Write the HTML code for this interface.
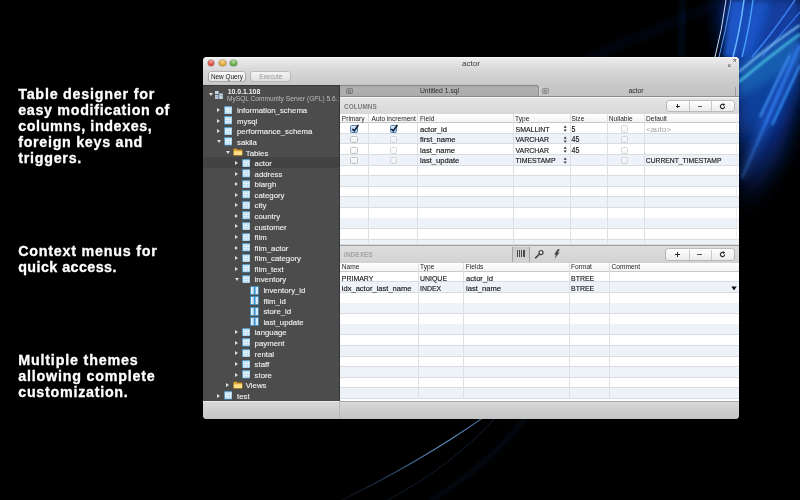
<!DOCTYPE html><html><head><meta charset="utf-8"><style>
*{margin:0;padding:0;box-sizing:border-box}
html,body{width:800px;height:500px;overflow:hidden;background:#000}
body{position:relative;font-family:"Liberation Sans", sans-serif}
.a{position:absolute}
.tri-r{position:absolute;width:0;height:0;border-top:2px solid transparent;border-bottom:2px solid transparent;border-left:3.4px solid #dedede}
.tri-d{position:absolute;width:0;height:0;border-left:2px solid transparent;border-right:2px solid transparent;border-top:3.4px solid #dedede}
.ti{position:absolute;width:8.5px;height:8px;border:0.9px solid #2b7eb0;border-top-color:#7fb8dc;background:linear-gradient(#d8ecf8 0 22%,#f2fbff 22% 100%)}
.ti:before{content:"";position:absolute;left:0.3px;right:0.3px;top:2.9px;height:0.5px;background:#a8d4f0;box-shadow:0 1.7px 0 #a8d4f0}
.ti:after{content:"";position:absolute;top:1.5px;bottom:0.3px;left:2.2px;width:2.2px;border-left:0.5px solid #a8d4f0;border-right:0.5px solid #a8d4f0}
.ci{position:absolute;width:8.5px;height:8.5px;border:0.9px solid #2b7eb0;background:linear-gradient(90deg,#eaf6ff 0 30%,#a6d2f0 30% 38%,#eaf6ff 38% 55%,#3f93d8 55% 78%,#eaf6ff 78%)}
.fi{position:absolute;width:9px;height:6.5px;border-radius:1px;background:linear-gradient(#ffe9a0,#e8b23c);box-shadow:0 0 0 0.5px #a07a20}
svg text{font-family:"Liberation Sans", sans-serif}
</style></head><body>
<svg class="a" style="left:0;top:0" width="800" height="500" viewBox="0 0 800 500">
<defs>
<filter id="b05" x="-50%" y="-50%" width="200%" height="200%"><feGaussianBlur stdDeviation="0.5"/></filter>
<filter id="b1" x="-50%" y="-50%" width="200%" height="200%"><feGaussianBlur stdDeviation="1"/></filter>
<filter id="b2" x="-50%" y="-50%" width="200%" height="200%"><feGaussianBlur stdDeviation="2"/></filter>
<filter id="b4" x="-50%" y="-50%" width="200%" height="200%"><feGaussianBlur stdDeviation="4"/></filter>
<filter id="b10" x="-50%" y="-50%" width="200%" height="200%"><feGaussianBlur stdDeviation="10"/></filter>
<linearGradient id="fade" x1="0" y1="0" x2="0" y2="1"><stop offset="0" stop-color="#fff"/><stop offset="0.5" stop-color="#fff"/><stop offset="1" stop-color="#000"/></linearGradient>
<mask id="m1"><rect x="0" y="0" width="800" height="240" fill="url(#fade)"/></mask>
</defs>
<g mask="url(#m1)">
<polygon points="718,0 800,0 800,90 780,160 745,210 739,120" fill="#0c3290" filter="url(#b10)"/>
<polygon points="735,0 800,0 800,45 739,70" fill="#1448b0" filter="url(#b10)" opacity="0.8"/>
<polygon points="739,55 800,40 800,80 739,150" fill="#0d44a0" filter="url(#b10)" opacity="0.85"/>
<line x1="684" y1="0" x2="680" y2="60" stroke="#0c2a5a" stroke-width="5" filter="url(#b4)" opacity="0.5"/>
<line x1="585" y1="60" x2="725" y2="0" stroke="#0c2458" stroke-width="4" filter="url(#b4)" opacity="0.45"/>
<polygon points="731,0 746,0 736,57 723,57" fill="#2060d8" filter="url(#b2)" opacity="0.8"/>
<polygon points="748,0 772,0 754,57 738,57" fill="#1a56c8" filter="url(#b4)" opacity="0.9"/>
<polygon points="775,0 800,0 800,20 770,57 755,57" fill="#123e9e" filter="url(#b4)" opacity="0.9"/>
<polygon points="800,30 800,62 739,98 739,66" fill="#1a6ab8" filter="url(#b4)" opacity="0.7"/>
<g filter="url(#b05)" fill="none">
<path d="M726,0 Q722,30 715,57" stroke="#c8e0ff" stroke-width="1"/>
<path d="M731,0 Q726,30 719,57" stroke="#5a9af0" stroke-width="1"/>
<path d="M744,0 Q740,30 733,57" stroke="#6ab8ff" stroke-width="1.5"/>
<path d="M753,0 Q749,30 742,57" stroke="#4aa0ff" stroke-width="1.4"/>
<path d="M795,0 Q775,30 752,57" stroke="#3a80f0" stroke-width="1.4"/>
<path d="M800,12 Q780,35 762,57" stroke="#2f70e0" stroke-width="1.2"/>
</g>
<g filter="url(#b1)" fill="none">
<path d="M800,25 Q770,45 739,72" stroke="#90d0ff" stroke-width="1.6"/>
<path d="M800,34 Q770,56 739,82" stroke="#50c8e8" stroke-width="2.4" opacity="0.85"/>
<path d="M790,55 Q775,85 760,117" stroke="#4a9af8" stroke-width="2"/>
<path d="M800,65 Q786,95 772,125" stroke="#3a9aff" stroke-width="2"/>
<path d="M800,45 Q772,108 742,178" stroke="#3a84f0" stroke-width="2.4"/>
</g>
<g filter="url(#b4)" fill="none">
<path d="M800,45 Q772,108 742,178" stroke="#2a6ae0" stroke-width="7" opacity="0.7"/>
</g>
</g>
<linearGradient id="cg" gradientUnits="userSpaceOnUse" x1="342" y1="500" x2="482" y2="419"><stop offset="0" stop-color="#1a2a40" stop-opacity="0.3"/><stop offset="0.45" stop-color="#3a6088"/><stop offset="0.75" stop-color="#6090c0"/><stop offset="1" stop-color="#4a78a8" stop-opacity="0.8"/></linearGradient>
<g filter="url(#b05)" fill="none">
<path d="M340,501 Q420,462 484,417" stroke="url(#cg)" stroke-width="1.1"/>
<path d="M386,501 Q452,466 496,417" stroke="#1c3452" stroke-width="1.2" opacity="0.35"/>
</g>
<g filter="url(#b2)" opacity="0.35" fill="none">
<path d="M430,501 Q488,466 526,417" stroke="#14305a" stroke-width="3"/>
</g>
</svg>

<div class="a" style="left:203px;top:57.2px;width:536.00px;height:361.80px;border-radius:4px;overflow:hidden;background:#d0d0d0"></div>
<div class="a" style="left:203px;top:57.2px;width:536.00px;height:39.20px;border-radius:4px 4px 0 0;background:linear-gradient(#eeeeee,#d8d8d8 33%,#c8c8c8 72%,#c2c2c2)"></div>
<div class="a" style="left:205px;top:57.2px;width:532.00px;height:0.80px;background:#f8f8f8"></div>
<div class="a" style="left:207.79999999999998px;top:59.9px;width:6.60px;height:6.60px;border-radius:50%;background:radial-gradient(circle at 50% 30%,#f8a098,#d23a30 70%);box-shadow:0 0 0 0.6px rgba(60,40,40,0.45)"></div>
<div class="a" style="left:218.99999999999997px;top:59.9px;width:6.60px;height:6.60px;border-radius:50%;background:radial-gradient(circle at 50% 30%,#fbd890,#d89a28 70%);box-shadow:0 0 0 0.6px rgba(60,40,40,0.45)"></div>
<div class="a" style="left:230.2px;top:59.9px;width:6.60px;height:6.60px;border-radius:50%;background:radial-gradient(circle at 50% 30%,#b8e4a0,#4e9e34 70%);box-shadow:0 0 0 0.6px rgba(60,40,40,0.45)"></div>
<div class="a" style="left:208.5px;top:72.2px;width:36.70px;height:9.00px;border-radius:2px;background:linear-gradient(#fdfdfd,#e4e4e4);box-shadow:0 0 0 0.6px #8a8a8a"></div>
<div class="a" style="left:251px;top:72.2px;width:39.40px;height:9.00px;border-radius:2px;background:linear-gradient(#f4f4f4,#e0e0e0);box-shadow:0 0 0 0.6px #a6a6a6"></div>
<svg class="a" style="left:727px;top:58px" width="10" height="10" viewBox="0 0 10 10"><path d="M1.5,8.5 L4,6 M1.5,8.5 v-2.5 M1.5,8.5 h2.5 M8.5,1.5 L6,4 M8.5,1.5 v2.5 M8.5,1.5 h-2.5" stroke="#8a8a8a" stroke-width="1" fill="none"/></svg>
<div class="a" style="left:203px;top:85.2px;width:135.70px;height:315.80px;background:#4c4c4c"></div>
<div class="a" style="left:203px;top:85.2px;width:135.70px;height:0.80px;background:#3a3a3a"></div>
<div class="a" style="left:338.5px;top:85.2px;width:1.00px;height:315.80px;background:#363636"></div>
<div class="a" style="left:203px;top:156.8px;width:135.70px;height:11.00px;background:#434343"></div>
<div class="tri-d" style="left:208.5px;top:93px"></div>
<svg class="a" style="left:214px;top:90px" width="10" height="10" viewBox="0 0 10 10"><rect x="1" y="1" width="3.6" height="3" fill="#c6d8e6"/><rect x="1" y="4.8" width="3.6" height="4.2" fill="#b4cadc"/><rect x="5.2" y="3.4" width="3.6" height="5.6" fill="#c0d4e4"/><rect x="5.6" y="5" width="2.8" height="0.6" fill="#7f9ab0"/><rect x="1.4" y="6.2" width="2.8" height="0.6" fill="#7f9ab0"/></svg>
<div class="tri-r" style="left:217.30px;top:108.10px"></div>
<svg class="a" style="left:224.00px;top:105.60px" width="8.4" height="8.5" viewBox="0 0 9 8.5" preserveAspectRatio="none"><rect x="0.4" y="0.4" width="8.2" height="7.7" fill="#f4fbff" stroke="#2f82b6" stroke-width="0.8"/><rect x="0.8" y="0.8" width="7.4" height="1.9" fill="#bfe2f6"/><path d="M3.1,2.7 V8 M5.9,2.7 V8 M0.8,4.5 H8.2 M0.8,6.3 H8.2" stroke="#a6d2ee" stroke-width="0.6"/></svg>
<div class="tri-r" style="left:217.30px;top:118.68px"></div>
<svg class="a" style="left:224.00px;top:116.18px" width="8.4" height="8.5" viewBox="0 0 9 8.5" preserveAspectRatio="none"><rect x="0.4" y="0.4" width="8.2" height="7.7" fill="#f4fbff" stroke="#2f82b6" stroke-width="0.8"/><rect x="0.8" y="0.8" width="7.4" height="1.9" fill="#bfe2f6"/><path d="M3.1,2.7 V8 M5.9,2.7 V8 M0.8,4.5 H8.2 M0.8,6.3 H8.2" stroke="#a6d2ee" stroke-width="0.6"/></svg>
<div class="tri-r" style="left:217.30px;top:129.26px"></div>
<svg class="a" style="left:224.00px;top:126.76px" width="8.4" height="8.5" viewBox="0 0 9 8.5" preserveAspectRatio="none"><rect x="0.4" y="0.4" width="8.2" height="7.7" fill="#f4fbff" stroke="#2f82b6" stroke-width="0.8"/><rect x="0.8" y="0.8" width="7.4" height="1.9" fill="#bfe2f6"/><path d="M3.1,2.7 V8 M5.9,2.7 V8 M0.8,4.5 H8.2 M0.8,6.3 H8.2" stroke="#a6d2ee" stroke-width="0.6"/></svg>
<div class="tri-d" style="left:217.20px;top:140.44px"></div>
<svg class="a" style="left:224.00px;top:137.34px" width="8.4" height="8.5" viewBox="0 0 9 8.5" preserveAspectRatio="none"><rect x="0.4" y="0.4" width="8.2" height="7.7" fill="#f4fbff" stroke="#2f82b6" stroke-width="0.8"/><rect x="0.8" y="0.8" width="7.4" height="1.9" fill="#bfe2f6"/><path d="M3.1,2.7 V8 M5.9,2.7 V8 M0.8,4.5 H8.2 M0.8,6.3 H8.2" stroke="#a6d2ee" stroke-width="0.6"/></svg>
<div class="tri-d" style="left:226.00px;top:151.02px"></div>
<svg class="a" style="left:233.10px;top:148.42px" width="10" height="8" viewBox="0 0 10 8"><path d="M0.5,1.5 Q0.5,0.8 1.2,0.8 L3.6,0.8 L4.4,1.8 L8.6,1.8 Q9.3,1.8 9.3,2.5 L9.3,7 Q9.3,7.4 8.9,7.4 L0.9,7.4 Q0.5,7.4 0.5,7 Z" fill="#e0a838" stroke="#a87818" stroke-width="0.5"/><path d="M0.9,3.2 L9,3.2 L9,7 L0.9,7 Z" fill="#ffe08a"/></svg>
<div class="tri-r" style="left:234.90px;top:161.00px"></div>
<svg class="a" style="left:241.60px;top:158.50px" width="8.4" height="8.5" viewBox="0 0 9 8.5" preserveAspectRatio="none"><rect x="0.4" y="0.4" width="8.2" height="7.7" fill="#f4fbff" stroke="#2f82b6" stroke-width="0.8"/><rect x="0.8" y="0.8" width="7.4" height="1.9" fill="#bfe2f6"/><path d="M3.1,2.7 V8 M5.9,2.7 V8 M0.8,4.5 H8.2 M0.8,6.3 H8.2" stroke="#a6d2ee" stroke-width="0.6"/></svg>
<div class="tri-r" style="left:234.90px;top:171.58px"></div>
<svg class="a" style="left:241.60px;top:169.08px" width="8.4" height="8.5" viewBox="0 0 9 8.5" preserveAspectRatio="none"><rect x="0.4" y="0.4" width="8.2" height="7.7" fill="#f4fbff" stroke="#2f82b6" stroke-width="0.8"/><rect x="0.8" y="0.8" width="7.4" height="1.9" fill="#bfe2f6"/><path d="M3.1,2.7 V8 M5.9,2.7 V8 M0.8,4.5 H8.2 M0.8,6.3 H8.2" stroke="#a6d2ee" stroke-width="0.6"/></svg>
<div class="tri-r" style="left:234.90px;top:182.16px"></div>
<svg class="a" style="left:241.60px;top:179.66px" width="8.4" height="8.5" viewBox="0 0 9 8.5" preserveAspectRatio="none"><rect x="0.4" y="0.4" width="8.2" height="7.7" fill="#f4fbff" stroke="#2f82b6" stroke-width="0.8"/><rect x="0.8" y="0.8" width="7.4" height="1.9" fill="#bfe2f6"/><path d="M3.1,2.7 V8 M5.9,2.7 V8 M0.8,4.5 H8.2 M0.8,6.3 H8.2" stroke="#a6d2ee" stroke-width="0.6"/></svg>
<div class="tri-r" style="left:234.90px;top:192.74px"></div>
<svg class="a" style="left:241.60px;top:190.24px" width="8.4" height="8.5" viewBox="0 0 9 8.5" preserveAspectRatio="none"><rect x="0.4" y="0.4" width="8.2" height="7.7" fill="#f4fbff" stroke="#2f82b6" stroke-width="0.8"/><rect x="0.8" y="0.8" width="7.4" height="1.9" fill="#bfe2f6"/><path d="M3.1,2.7 V8 M5.9,2.7 V8 M0.8,4.5 H8.2 M0.8,6.3 H8.2" stroke="#a6d2ee" stroke-width="0.6"/></svg>
<div class="tri-r" style="left:234.90px;top:203.32px"></div>
<svg class="a" style="left:241.60px;top:200.82px" width="8.4" height="8.5" viewBox="0 0 9 8.5" preserveAspectRatio="none"><rect x="0.4" y="0.4" width="8.2" height="7.7" fill="#f4fbff" stroke="#2f82b6" stroke-width="0.8"/><rect x="0.8" y="0.8" width="7.4" height="1.9" fill="#bfe2f6"/><path d="M3.1,2.7 V8 M5.9,2.7 V8 M0.8,4.5 H8.2 M0.8,6.3 H8.2" stroke="#a6d2ee" stroke-width="0.6"/></svg>
<div class="tri-r" style="left:234.90px;top:213.90px"></div>
<svg class="a" style="left:241.60px;top:211.40px" width="8.4" height="8.5" viewBox="0 0 9 8.5" preserveAspectRatio="none"><rect x="0.4" y="0.4" width="8.2" height="7.7" fill="#f4fbff" stroke="#2f82b6" stroke-width="0.8"/><rect x="0.8" y="0.8" width="7.4" height="1.9" fill="#bfe2f6"/><path d="M3.1,2.7 V8 M5.9,2.7 V8 M0.8,4.5 H8.2 M0.8,6.3 H8.2" stroke="#a6d2ee" stroke-width="0.6"/></svg>
<div class="tri-r" style="left:234.90px;top:224.48px"></div>
<svg class="a" style="left:241.60px;top:221.98px" width="8.4" height="8.5" viewBox="0 0 9 8.5" preserveAspectRatio="none"><rect x="0.4" y="0.4" width="8.2" height="7.7" fill="#f4fbff" stroke="#2f82b6" stroke-width="0.8"/><rect x="0.8" y="0.8" width="7.4" height="1.9" fill="#bfe2f6"/><path d="M3.1,2.7 V8 M5.9,2.7 V8 M0.8,4.5 H8.2 M0.8,6.3 H8.2" stroke="#a6d2ee" stroke-width="0.6"/></svg>
<div class="tri-r" style="left:234.90px;top:235.06px"></div>
<svg class="a" style="left:241.60px;top:232.56px" width="8.4" height="8.5" viewBox="0 0 9 8.5" preserveAspectRatio="none"><rect x="0.4" y="0.4" width="8.2" height="7.7" fill="#f4fbff" stroke="#2f82b6" stroke-width="0.8"/><rect x="0.8" y="0.8" width="7.4" height="1.9" fill="#bfe2f6"/><path d="M3.1,2.7 V8 M5.9,2.7 V8 M0.8,4.5 H8.2 M0.8,6.3 H8.2" stroke="#a6d2ee" stroke-width="0.6"/></svg>
<div class="tri-r" style="left:234.90px;top:245.64px"></div>
<svg class="a" style="left:241.60px;top:243.14px" width="8.4" height="8.5" viewBox="0 0 9 8.5" preserveAspectRatio="none"><rect x="0.4" y="0.4" width="8.2" height="7.7" fill="#f4fbff" stroke="#2f82b6" stroke-width="0.8"/><rect x="0.8" y="0.8" width="7.4" height="1.9" fill="#bfe2f6"/><path d="M3.1,2.7 V8 M5.9,2.7 V8 M0.8,4.5 H8.2 M0.8,6.3 H8.2" stroke="#a6d2ee" stroke-width="0.6"/></svg>
<div class="tri-r" style="left:234.90px;top:256.22px"></div>
<svg class="a" style="left:241.60px;top:253.72px" width="8.4" height="8.5" viewBox="0 0 9 8.5" preserveAspectRatio="none"><rect x="0.4" y="0.4" width="8.2" height="7.7" fill="#f4fbff" stroke="#2f82b6" stroke-width="0.8"/><rect x="0.8" y="0.8" width="7.4" height="1.9" fill="#bfe2f6"/><path d="M3.1,2.7 V8 M5.9,2.7 V8 M0.8,4.5 H8.2 M0.8,6.3 H8.2" stroke="#a6d2ee" stroke-width="0.6"/></svg>
<div class="tri-r" style="left:234.90px;top:266.80px"></div>
<svg class="a" style="left:241.60px;top:264.30px" width="8.4" height="8.5" viewBox="0 0 9 8.5" preserveAspectRatio="none"><rect x="0.4" y="0.4" width="8.2" height="7.7" fill="#f4fbff" stroke="#2f82b6" stroke-width="0.8"/><rect x="0.8" y="0.8" width="7.4" height="1.9" fill="#bfe2f6"/><path d="M3.1,2.7 V8 M5.9,2.7 V8 M0.8,4.5 H8.2 M0.8,6.3 H8.2" stroke="#a6d2ee" stroke-width="0.6"/></svg>
<div class="tri-d" style="left:234.80px;top:277.98px"></div>
<svg class="a" style="left:241.60px;top:274.88px" width="8.4" height="8.5" viewBox="0 0 9 8.5" preserveAspectRatio="none"><rect x="0.4" y="0.4" width="8.2" height="7.7" fill="#f4fbff" stroke="#2f82b6" stroke-width="0.8"/><rect x="0.8" y="0.8" width="7.4" height="1.9" fill="#bfe2f6"/><path d="M3.1,2.7 V8 M5.9,2.7 V8 M0.8,4.5 H8.2 M0.8,6.3 H8.2" stroke="#a6d2ee" stroke-width="0.6"/></svg>
<svg class="a" style="left:250.40px;top:285.66px" width="9" height="9" viewBox="0 0 9 9"><rect x="0.4" y="0.4" width="8.2" height="8.2" fill="#eef8ff" stroke="#2f82b6" stroke-width="0.8"/><rect x="3.6" y="0.8" width="2" height="7.4" fill="#3a8fd0"/><path d="M2.2,0.8 V8.2 M7,0.8 V8.2" stroke="#a6d2ee" stroke-width="0.6"/></svg>
<svg class="a" style="left:250.40px;top:296.24px" width="9" height="9" viewBox="0 0 9 9"><rect x="0.4" y="0.4" width="8.2" height="8.2" fill="#eef8ff" stroke="#2f82b6" stroke-width="0.8"/><rect x="3.6" y="0.8" width="2" height="7.4" fill="#3a8fd0"/><path d="M2.2,0.8 V8.2 M7,0.8 V8.2" stroke="#a6d2ee" stroke-width="0.6"/></svg>
<svg class="a" style="left:250.40px;top:306.82px" width="9" height="9" viewBox="0 0 9 9"><rect x="0.4" y="0.4" width="8.2" height="8.2" fill="#eef8ff" stroke="#2f82b6" stroke-width="0.8"/><rect x="3.6" y="0.8" width="2" height="7.4" fill="#3a8fd0"/><path d="M2.2,0.8 V8.2 M7,0.8 V8.2" stroke="#a6d2ee" stroke-width="0.6"/></svg>
<svg class="a" style="left:250.40px;top:317.40px" width="9" height="9" viewBox="0 0 9 9"><rect x="0.4" y="0.4" width="8.2" height="8.2" fill="#eef8ff" stroke="#2f82b6" stroke-width="0.8"/><rect x="3.6" y="0.8" width="2" height="7.4" fill="#3a8fd0"/><path d="M2.2,0.8 V8.2 M7,0.8 V8.2" stroke="#a6d2ee" stroke-width="0.6"/></svg>
<div class="tri-r" style="left:234.90px;top:330.28px"></div>
<svg class="a" style="left:241.60px;top:327.78px" width="8.4" height="8.5" viewBox="0 0 9 8.5" preserveAspectRatio="none"><rect x="0.4" y="0.4" width="8.2" height="7.7" fill="#f4fbff" stroke="#2f82b6" stroke-width="0.8"/><rect x="0.8" y="0.8" width="7.4" height="1.9" fill="#bfe2f6"/><path d="M3.1,2.7 V8 M5.9,2.7 V8 M0.8,4.5 H8.2 M0.8,6.3 H8.2" stroke="#a6d2ee" stroke-width="0.6"/></svg>
<div class="tri-r" style="left:234.90px;top:340.86px"></div>
<svg class="a" style="left:241.60px;top:338.36px" width="8.4" height="8.5" viewBox="0 0 9 8.5" preserveAspectRatio="none"><rect x="0.4" y="0.4" width="8.2" height="7.7" fill="#f4fbff" stroke="#2f82b6" stroke-width="0.8"/><rect x="0.8" y="0.8" width="7.4" height="1.9" fill="#bfe2f6"/><path d="M3.1,2.7 V8 M5.9,2.7 V8 M0.8,4.5 H8.2 M0.8,6.3 H8.2" stroke="#a6d2ee" stroke-width="0.6"/></svg>
<div class="tri-r" style="left:234.90px;top:351.44px"></div>
<svg class="a" style="left:241.60px;top:348.94px" width="8.4" height="8.5" viewBox="0 0 9 8.5" preserveAspectRatio="none"><rect x="0.4" y="0.4" width="8.2" height="7.7" fill="#f4fbff" stroke="#2f82b6" stroke-width="0.8"/><rect x="0.8" y="0.8" width="7.4" height="1.9" fill="#bfe2f6"/><path d="M3.1,2.7 V8 M5.9,2.7 V8 M0.8,4.5 H8.2 M0.8,6.3 H8.2" stroke="#a6d2ee" stroke-width="0.6"/></svg>
<div class="tri-r" style="left:234.90px;top:362.02px"></div>
<svg class="a" style="left:241.60px;top:359.52px" width="8.4" height="8.5" viewBox="0 0 9 8.5" preserveAspectRatio="none"><rect x="0.4" y="0.4" width="8.2" height="7.7" fill="#f4fbff" stroke="#2f82b6" stroke-width="0.8"/><rect x="0.8" y="0.8" width="7.4" height="1.9" fill="#bfe2f6"/><path d="M3.1,2.7 V8 M5.9,2.7 V8 M0.8,4.5 H8.2 M0.8,6.3 H8.2" stroke="#a6d2ee" stroke-width="0.6"/></svg>
<div class="tri-r" style="left:234.90px;top:372.60px"></div>
<svg class="a" style="left:241.60px;top:370.10px" width="8.4" height="8.5" viewBox="0 0 9 8.5" preserveAspectRatio="none"><rect x="0.4" y="0.4" width="8.2" height="7.7" fill="#f4fbff" stroke="#2f82b6" stroke-width="0.8"/><rect x="0.8" y="0.8" width="7.4" height="1.9" fill="#bfe2f6"/><path d="M3.1,2.7 V8 M5.9,2.7 V8 M0.8,4.5 H8.2 M0.8,6.3 H8.2" stroke="#a6d2ee" stroke-width="0.6"/></svg>
<div class="tri-r" style="left:226.10px;top:383.18px"></div>
<svg class="a" style="left:233.10px;top:381.18px" width="10" height="8" viewBox="0 0 10 8"><path d="M0.5,1.5 Q0.5,0.8 1.2,0.8 L3.6,0.8 L4.4,1.8 L8.6,1.8 Q9.3,1.8 9.3,2.5 L9.3,7 Q9.3,7.4 8.9,7.4 L0.9,7.4 Q0.5,7.4 0.5,7 Z" fill="#e0a838" stroke="#a87818" stroke-width="0.5"/><path d="M0.9,3.2 L9,3.2 L9,7 L0.9,7 Z" fill="#ffe08a"/></svg>
<div class="tri-r" style="left:217.30px;top:393.76px"></div>
<svg class="a" style="left:224.00px;top:391.26px" width="8.4" height="8.5" viewBox="0 0 9 8.5" preserveAspectRatio="none"><rect x="0.4" y="0.4" width="8.2" height="7.7" fill="#f4fbff" stroke="#2f82b6" stroke-width="0.8"/><rect x="0.8" y="0.8" width="7.4" height="1.9" fill="#bfe2f6"/><path d="M3.1,2.7 V8 M5.9,2.7 V8 M0.8,4.5 H8.2 M0.8,6.3 H8.2" stroke="#a6d2ee" stroke-width="0.6"/></svg>
<div class="a" style="left:339.5px;top:85.4px;width:199.50px;height:11.00px;background:linear-gradient(#a9a9a9,#b0b0b0 30%,#acacac);border-top:0.8px solid #8a8a8a;border-right:0.8px solid #8a8a8a;border-top-right-radius:3px"></div>
<div class="a" style="left:539.2px;top:87px;width:0.80px;height:9.20px;background:#dadada"></div>
<div class="a" style="left:346px;top:88px;width:6.60px;height:6.40px;border:0.8px solid #7a7a7a;border-radius:1.5px;background:#a2a2a2"></div>
<svg class="a" style="left:346px;top:88px" width="7" height="7" viewBox="0 0 7 7"><path d="M2,2 L4.8,4.8 M4.8,2 L2,4.8" stroke="#6a6a6a" stroke-width="1"/></svg>
<div class="a" style="left:542.4px;top:87.9px;width:6.40px;height:6.00px;border:0.8px solid #8e8e8e;border-radius:1.5px;background:#b2b2b2"></div>
<svg class="a" style="left:542.4px;top:87.9px" width="7" height="7" viewBox="0 0 7 7"><path d="M2,2 L4.6,4.6 M4.6,2 L2,4.6" stroke="#777" stroke-width="0.9"/></svg>
<div class="a" style="left:735.3px;top:86.5px;width:0.80px;height:9.90px;background:#9a9a9a"></div>
<div class="a" style="left:339.5px;top:96.2px;width:399.50px;height:0.80px;background:#8e8e8e"></div>
<div class="a" style="left:339.5px;top:97px;width:399.50px;height:304.00px;background:#ffffff"></div>
<div class="a" style="left:339.5px;top:97px;width:399.50px;height:1.00px;background:#f4f4f4"></div>
<div class="a" style="left:339.5px;top:98px;width:399.50px;height:15.50px;background:linear-gradient(#e4e4e4,#d8d8d8)"></div>
<div class="a" style="left:339.5px;top:113.5px;width:399.50px;height:0.70px;background:#acacac"></div>
<div class="a" style="left:666.7px;top:100.8px;width:67.50px;height:10.60px;border-radius:2.5px;background:linear-gradient(#fefefe,#ececec);box-shadow:0 0 0 0.6px #9c9c9c"></div>
<div class="a" style="left:689px;top:101.3px;width:0.60px;height:9.60px;background:#c8c8c8"></div>
<div class="a" style="left:711.3px;top:101.3px;width:0.60px;height:9.60px;background:#c8c8c8"></div>
<div class="a" style="left:675.5500000000001px;top:105.6px;width:4.60px;height:1.00px;background:#2a2a2a"></div>
<div class="a" style="left:677.35px;top:103.8px;width:1.00px;height:4.60px;background:#2a2a2a"></div>
<div class="a" style="left:697.85px;top:105.69999999999999px;width:4.60px;height:0.90px;background:#555"></div>
<svg class="a" style="left:719.25px;top:102.60px" width="7" height="7" viewBox="0 0 7 7"><path d="M5.6,3.5 A2.1,2.1 0 1 1 4.6,1.7" stroke="#2a2a2a" stroke-width="1.2" fill="none"/><path d="M3.6,0.3 L6.2,1.2 L4.4,3.2 Z" fill="#2a2a2a"/></svg>
<div class="a" style="left:339.5px;top:114.2px;width:399.50px;height:8.10px;background:linear-gradient(#ffffff,#f3f3f3)"></div>
<div class="a" style="left:339.5px;top:122.3px;width:399.50px;height:0.60px;background:#c9c9c9"></div>
<div class="a" style="left:339.5px;top:132.8px;width:399.50px;height:0.70px;background:#d9dce0"></div>
<div class="a" style="left:339.5px;top:133.5px;width:399.50px;height:10.60px;background:#eef3fa"></div>
<div class="a" style="left:339.5px;top:143.4px;width:399.50px;height:0.70px;background:#d9dce0"></div>
<div class="a" style="left:339.5px;top:154.0px;width:399.50px;height:0.70px;background:#d9dce0"></div>
<div class="a" style="left:339.5px;top:154.7px;width:399.50px;height:10.60px;background:#eef3fa"></div>
<div class="a" style="left:339.5px;top:164.6px;width:399.50px;height:0.70px;background:#d9dce0"></div>
<div class="a" style="left:339.5px;top:175.20000000000002px;width:399.50px;height:0.70px;background:#d9dce0"></div>
<div class="a" style="left:339.5px;top:175.9px;width:399.50px;height:10.60px;background:#eef3fa"></div>
<div class="a" style="left:339.5px;top:185.8px;width:399.50px;height:0.70px;background:#d9dce0"></div>
<div class="a" style="left:339.5px;top:196.4px;width:399.50px;height:0.70px;background:#d9dce0"></div>
<div class="a" style="left:339.5px;top:197.10000000000002px;width:399.50px;height:10.60px;background:#eef3fa"></div>
<div class="a" style="left:339.5px;top:207.00000000000003px;width:399.50px;height:0.70px;background:#d9dce0"></div>
<div class="a" style="left:339.5px;top:217.6px;width:399.50px;height:0.70px;background:#d9dce0"></div>
<div class="a" style="left:339.5px;top:218.3px;width:399.50px;height:10.60px;background:#eef3fa"></div>
<div class="a" style="left:339.5px;top:228.20000000000002px;width:399.50px;height:0.70px;background:#d9dce0"></div>
<div class="a" style="left:339.5px;top:238.8px;width:399.50px;height:0.70px;background:#d9dce0"></div>
<div class="a" style="left:339.5px;top:239.5px;width:399.50px;height:5.50px;background:#eef3fa"></div>
<div class="a" style="left:339.5px;top:244.3px;width:399.50px;height:0.70px;background:#d9dce0"></div>
<div class="a" style="left:368px;top:114.2px;width:0.70px;height:130.80px;background:#dcdfe3"></div>
<div class="a" style="left:417.3px;top:114.2px;width:0.70px;height:130.80px;background:#dcdfe3"></div>
<div class="a" style="left:513px;top:114.2px;width:0.70px;height:130.80px;background:#dcdfe3"></div>
<div class="a" style="left:569.5px;top:114.2px;width:0.70px;height:130.80px;background:#dcdfe3"></div>
<div class="a" style="left:606.6px;top:114.2px;width:0.70px;height:130.80px;background:#dcdfe3"></div>
<div class="a" style="left:643.5px;top:114.2px;width:0.70px;height:130.80px;background:#dcdfe3"></div>
<div class="a" style="left:736.2px;top:114.2px;width:0.70px;height:130.80px;background:#eceef0"></div>
<div class="a" style="left:339.5px;top:244.6px;width:399.50px;height:1.00px;background:#a0a0a0"></div>
<div class="a" style="left:350.4px;top:125.40000000000002px;width:7.60px;height:7.20px;border-radius:1.5px;border:0.7px solid #5b7fae;background:linear-gradient(#dcebfd,#a9cdf4)"></div>
<svg class="a" style="left:350.70px;top:123.60px" width="9" height="9" viewBox="0 0 9 9"><path d="M1.3,5 L3.3,6.9 L7.4,1" stroke="#0e1a2c" stroke-width="1.6" fill="none"/></svg>
<div class="a" style="left:389.9px;top:125.40000000000002px;width:7.60px;height:7.20px;border-radius:1.5px;border:0.7px solid #5b7fae;background:linear-gradient(#dcebfd,#a9cdf4)"></div>
<svg class="a" style="left:390.20px;top:123.60px" width="9" height="9" viewBox="0 0 9 9"><path d="M1.3,5 L3.3,6.9 L7.4,1" stroke="#0e1a2c" stroke-width="1.6" fill="none"/></svg>
<div class="a" style="left:620.8000000000001px;top:125.40000000000002px;width:7.60px;height:7.20px;opacity:0.55;border-radius:1.5px;border:0.7px solid #b8b8b8;background:linear-gradient(#ffffff,#eeeeee)"></div>
<svg class="a" style="left:563.3px;top:125.20px" width="4.4" height="7.4" viewBox="0 0 5 8"><path d="M2.5,0.3 L4.3,2.8 L0.7,2.8 Z M2.5,7.5 L4.3,5 L0.7,5 Z" fill="#333"/></svg>
<div class="a" style="left:350.4px;top:136.00000000000003px;width:7.60px;height:7.20px;opacity:0.85;border-radius:1.5px;border:0.7px solid #b8b8b8;background:linear-gradient(#ffffff,#eeeeee)"></div>
<div class="a" style="left:389.9px;top:136.00000000000003px;width:7.60px;height:7.20px;opacity:0.55;border-radius:1.5px;border:0.7px solid #b8b8b8;background:linear-gradient(#ffffff,#eeeeee)"></div>
<div class="a" style="left:620.8000000000001px;top:136.00000000000003px;width:7.60px;height:7.20px;opacity:0.55;border-radius:1.5px;border:0.7px solid #b8b8b8;background:linear-gradient(#ffffff,#eeeeee)"></div>
<svg class="a" style="left:563.3px;top:135.80px" width="4.4" height="7.4" viewBox="0 0 5 8"><path d="M2.5,0.3 L4.3,2.8 L0.7,2.8 Z M2.5,7.5 L4.3,5 L0.7,5 Z" fill="#333"/></svg>
<div class="a" style="left:350.4px;top:146.60000000000002px;width:7.60px;height:7.20px;opacity:0.85;border-radius:1.5px;border:0.7px solid #b8b8b8;background:linear-gradient(#ffffff,#eeeeee)"></div>
<div class="a" style="left:389.9px;top:146.60000000000002px;width:7.60px;height:7.20px;opacity:0.55;border-radius:1.5px;border:0.7px solid #b8b8b8;background:linear-gradient(#ffffff,#eeeeee)"></div>
<div class="a" style="left:620.8000000000001px;top:146.60000000000002px;width:7.60px;height:7.20px;opacity:0.55;border-radius:1.5px;border:0.7px solid #b8b8b8;background:linear-gradient(#ffffff,#eeeeee)"></div>
<svg class="a" style="left:563.3px;top:146.40px" width="4.4" height="7.4" viewBox="0 0 5 8"><path d="M2.5,0.3 L4.3,2.8 L0.7,2.8 Z M2.5,7.5 L4.3,5 L0.7,5 Z" fill="#333"/></svg>
<div class="a" style="left:350.4px;top:157.20000000000002px;width:7.60px;height:7.20px;opacity:0.85;border-radius:1.5px;border:0.7px solid #b8b8b8;background:linear-gradient(#ffffff,#eeeeee)"></div>
<div class="a" style="left:389.9px;top:157.20000000000002px;width:7.60px;height:7.20px;opacity:0.55;border-radius:1.5px;border:0.7px solid #b8b8b8;background:linear-gradient(#ffffff,#eeeeee)"></div>
<div class="a" style="left:620.8000000000001px;top:157.20000000000002px;width:7.60px;height:7.20px;opacity:0.55;border-radius:1.5px;border:0.7px solid #b8b8b8;background:linear-gradient(#ffffff,#eeeeee)"></div>
<svg class="a" style="left:563.3px;top:157.00px" width="4.4" height="7.4" viewBox="0 0 5 8"><path d="M2.5,0.3 L4.3,2.8 L0.7,2.8 Z M2.5,7.5 L4.3,5 L0.7,5 Z" fill="#333"/></svg>
<div class="a" style="left:339.5px;top:245.6px;width:399.50px;height:17.20px;background:linear-gradient(#dedede,#d2d2d2)"></div>
<div class="a" style="left:339.5px;top:262.8px;width:399.50px;height:0.60px;background:#b0b0b0"></div>
<div class="a" style="left:512.5px;top:247.3px;width:17.20px;height:14.90px;background:linear-gradient(#cbcbcb,#d3d3d3)"></div>
<div class="a" style="left:512.1px;top:247.3px;width:0.70px;height:14.90px;background:#a4a4a4"></div>
<div class="a" style="left:529.3px;top:247.3px;width:0.70px;height:14.90px;background:#a4a4a4"></div>
<div class="a" style="left:517.0px;top:250px;width:1.30px;height:7.40px;background:#4a4a4a"></div>
<div class="a" style="left:519.1px;top:250px;width:1.30px;height:7.40px;background:#4a4a4a"></div>
<div class="a" style="left:521.2px;top:250px;width:1.30px;height:7.40px;background:#4a4a4a"></div>
<div class="a" style="left:523.3px;top:250px;width:1.30px;height:7.40px;background:#4a4a4a"></div>
<svg class="a" style="left:533px;top:248.5px" width="11" height="11" viewBox="0 0 11 11"><circle cx="8" cy="3.6" r="2" stroke="#454545" stroke-width="1.3" fill="#f0f0f0"/><path d="M6.6,5 L2.6,8.8" stroke="#454545" stroke-width="1.6" fill="none" stroke-linecap="round"/></svg>
<svg class="a" style="left:553px;top:248.5px" width="8" height="10" viewBox="0 0 8 10"><path d="M4.6,0.2 L6.9,0.2 L4.9,3.6 L6.6,3.6 L1.8,9.4 L2.9,5.4 L1.1,5.4 Z" fill="#4a4a4a"/></svg>
<div class="a" style="left:666px;top:249px;width:68.00px;height:11.40px;border-radius:2.5px;background:linear-gradient(#fefefe,#ececec);box-shadow:0 0 0 0.6px #9c9c9c"></div>
<div class="a" style="left:688.6px;top:249.5px;width:0.60px;height:10.40px;background:#c8c8c8"></div>
<div class="a" style="left:710.8px;top:249.5px;width:0.60px;height:10.40px;background:#c8c8c8"></div>
<div class="a" style="left:675.0px;top:254.2px;width:4.60px;height:1.00px;background:#2a2a2a"></div>
<div class="a" style="left:676.8px;top:252.39999999999998px;width:1.00px;height:4.60px;background:#2a2a2a"></div>
<div class="a" style="left:697.4000000000001px;top:254.29999999999998px;width:4.60px;height:0.90px;background:#555"></div>
<svg class="a" style="left:718.90px;top:251.20px" width="7" height="7" viewBox="0 0 7 7"><path d="M5.6,3.5 A2.1,2.1 0 1 1 4.6,1.7" stroke="#2a2a2a" stroke-width="1.2" fill="none"/><path d="M3.6,0.3 L6.2,1.2 L4.4,3.2 Z" fill="#2a2a2a"/></svg>
<div class="a" style="left:339.5px;top:263.4px;width:399.50px;height:7.40px;background:linear-gradient(#ffffff,#f3f3f3)"></div>
<div class="a" style="left:339.5px;top:270.8px;width:399.50px;height:0.60px;background:#c9c9c9"></div>
<div class="a" style="left:339.5px;top:281.3px;width:399.50px;height:0.70px;background:#d9dce0"></div>
<div class="a" style="left:339.5px;top:282.0px;width:399.50px;height:10.60px;background:#eef3fa"></div>
<div class="a" style="left:339.5px;top:291.90000000000003px;width:399.50px;height:0.70px;background:#d9dce0"></div>
<div class="a" style="left:339.5px;top:302.5px;width:399.50px;height:0.70px;background:#d9dce0"></div>
<div class="a" style="left:339.5px;top:303.2px;width:399.50px;height:10.60px;background:#eef3fa"></div>
<div class="a" style="left:339.5px;top:313.1px;width:399.50px;height:0.70px;background:#d9dce0"></div>
<div class="a" style="left:339.5px;top:323.7px;width:399.50px;height:0.70px;background:#d9dce0"></div>
<div class="a" style="left:339.5px;top:324.4px;width:399.50px;height:10.60px;background:#eef3fa"></div>
<div class="a" style="left:339.5px;top:334.3px;width:399.50px;height:0.70px;background:#d9dce0"></div>
<div class="a" style="left:339.5px;top:344.90000000000003px;width:399.50px;height:0.70px;background:#d9dce0"></div>
<div class="a" style="left:339.5px;top:345.59999999999997px;width:399.50px;height:10.60px;background:#eef3fa"></div>
<div class="a" style="left:339.5px;top:355.5px;width:399.50px;height:0.70px;background:#d9dce0"></div>
<div class="a" style="left:339.5px;top:366.1px;width:399.50px;height:0.70px;background:#d9dce0"></div>
<div class="a" style="left:339.5px;top:366.79999999999995px;width:399.50px;height:10.60px;background:#eef3fa"></div>
<div class="a" style="left:339.5px;top:376.7px;width:399.50px;height:0.70px;background:#d9dce0"></div>
<div class="a" style="left:339.5px;top:387.3px;width:399.50px;height:0.70px;background:#d9dce0"></div>
<div class="a" style="left:339.5px;top:388.0px;width:399.50px;height:10.60px;background:#eef3fa"></div>
<div class="a" style="left:339.5px;top:397.90000000000003px;width:399.50px;height:0.70px;background:#d9dce0"></div>
<div class="a" style="left:417.7px;top:263.4px;width:0.70px;height:135.40px;background:#dcdfe3"></div>
<div class="a" style="left:463.3px;top:263.4px;width:0.70px;height:135.40px;background:#dcdfe3"></div>
<div class="a" style="left:568.5px;top:263.4px;width:0.70px;height:135.40px;background:#dcdfe3"></div>
<div class="a" style="left:609px;top:263.4px;width:0.70px;height:135.40px;background:#dcdfe3"></div>
<svg class="a" style="left:731px;top:285.5px" width="6" height="5" viewBox="0 0 6 5"><path d="M0.3,0.5 L5.7,0.5 L3,4.6 Z" fill="#111"/></svg>
<div class="a" style="left:339.5px;top:398.8px;width:399.50px;height:2.20px;background:#ffffff"></div>
<div class="a" style="left:203px;top:401px;width:536.00px;height:18.00px;border-radius:0 0 4px 4px;background:linear-gradient(#d9d9d9,#c3c3c3)"></div>
<div class="a" style="left:339.5px;top:400.8px;width:399.50px;height:1.00px;background:#a8a8a8"></div>
<div class="a" style="left:203px;top:401.3px;width:135.80px;height:1.00px;background:#e8e8e8"></div>
<div class="a" style="left:338.8px;top:401.4px;width:0.70px;height:17.60px;background:#b8b8b8"></div>
<svg class="a" style="left:0;top:0" width="800" height="500" viewBox="0 0 800 500"><defs><clipPath id="sbclip"><rect x="203" y="85" width="135.5" height="20"/></clipPath></defs><text x="18.2" y="99" font-size="14.3" fill="#ffffff" text-anchor="start" font-weight="bold" stroke="#ffffff" stroke-width="0.3" textLength="136.10000000000002" lengthAdjust="spacing">Table designer for</text>
<text x="18.2" y="115" font-size="14.3" fill="#ffffff" text-anchor="start" font-weight="bold" stroke="#ffffff" stroke-width="0.3" textLength="151.10000000000002" lengthAdjust="spacing">easy modification of</text>
<text x="18.2" y="131" font-size="14.3" fill="#ffffff" text-anchor="start" font-weight="bold" stroke="#ffffff" stroke-width="0.3" textLength="133.60000000000002" lengthAdjust="spacing">columns, indexes,</text>
<text x="18.2" y="147" font-size="14.3" fill="#ffffff" text-anchor="start" font-weight="bold" stroke="#ffffff" stroke-width="0.3" textLength="124.1" lengthAdjust="spacing">foreign keys and</text>
<text x="18.2" y="163" font-size="14.3" fill="#ffffff" text-anchor="start" font-weight="bold" stroke="#ffffff" stroke-width="0.3" textLength="63.099999999999994" lengthAdjust="spacing">triggers.</text>
<text x="18.2" y="256" font-size="14.3" fill="#ffffff" text-anchor="start" font-weight="bold" stroke="#ffffff" stroke-width="0.3" textLength="138.60000000000002" lengthAdjust="spacing">Context menus for</text>
<text x="18.2" y="272" font-size="14.3" fill="#ffffff" text-anchor="start" font-weight="bold" stroke="#ffffff" stroke-width="0.3" textLength="98.3" lengthAdjust="spacing">quick access.</text>
<text x="18.2" y="365" font-size="14.3" fill="#ffffff" text-anchor="start" font-weight="bold" stroke="#ffffff" stroke-width="0.3" textLength="119.5" lengthAdjust="spacing">Multiple themes</text>
<text x="18.2" y="381" font-size="14.3" fill="#ffffff" text-anchor="start" font-weight="bold" stroke="#ffffff" stroke-width="0.3" textLength="136.5" lengthAdjust="spacing">allowing complete</text>
<text x="18.2" y="397" font-size="14.3" fill="#ffffff" text-anchor="start" font-weight="bold" stroke="#ffffff" stroke-width="0.3" textLength="109.6" lengthAdjust="spacing">customization.</text>
<text x="471" y="66" font-size="8" fill="#383838" text-anchor="middle" >actor</text>
<text x="226.9" y="79" font-size="6.4" fill="#1a1a1a" text-anchor="middle" >New Query</text>
<text x="270.7" y="79" font-size="6.4" fill="#9a9a9a" text-anchor="middle" >Execute</text>
<text x="227.7" y="94" font-size="6.9" fill="#f2f2f2" text-anchor="start" font-weight="bold">10.0.1.108</text>
<text x="227" y="101" font-size="6.6" fill="#bdbdbd" text-anchor="start" clip-path="url(#sbclip)">MySQL Community Server (GPL) 5.6.1</text>
<text x="237.00" y="113.20" font-size="7.8" fill="#f0f0f0" text-anchor="start" stroke="#f0f0f0" stroke-width="0.12">information_schema</text>
<text x="237.00" y="123.78" font-size="7.8" fill="#f0f0f0" text-anchor="start" stroke="#f0f0f0" stroke-width="0.12">mysql</text>
<text x="237.00" y="134.36" font-size="7.8" fill="#f0f0f0" text-anchor="start" stroke="#f0f0f0" stroke-width="0.12">performance_schema</text>
<text x="237.00" y="144.94" font-size="7.8" fill="#f0f0f0" text-anchor="start" stroke="#f0f0f0" stroke-width="0.12">sakila</text>
<text x="245.80" y="155.52" font-size="7.8" fill="#f0f0f0" text-anchor="start" stroke="#f0f0f0" stroke-width="0.12">Tables</text>
<text x="254.60" y="166.10" font-size="7.8" fill="#f0f0f0" text-anchor="start" stroke="#f0f0f0" stroke-width="0.12">actor</text>
<text x="254.60" y="176.68" font-size="7.8" fill="#f0f0f0" text-anchor="start" stroke="#f0f0f0" stroke-width="0.12">address</text>
<text x="254.60" y="187.26" font-size="7.8" fill="#f0f0f0" text-anchor="start" stroke="#f0f0f0" stroke-width="0.12">blargh</text>
<text x="254.60" y="197.84" font-size="7.8" fill="#f0f0f0" text-anchor="start" stroke="#f0f0f0" stroke-width="0.12">category</text>
<text x="254.60" y="208.42" font-size="7.8" fill="#f0f0f0" text-anchor="start" stroke="#f0f0f0" stroke-width="0.12">city</text>
<text x="254.60" y="219.00" font-size="7.8" fill="#f0f0f0" text-anchor="start" stroke="#f0f0f0" stroke-width="0.12">country</text>
<text x="254.60" y="229.58" font-size="7.8" fill="#f0f0f0" text-anchor="start" stroke="#f0f0f0" stroke-width="0.12">customer</text>
<text x="254.60" y="240.16" font-size="7.8" fill="#f0f0f0" text-anchor="start" stroke="#f0f0f0" stroke-width="0.12">film</text>
<text x="254.60" y="250.74" font-size="7.8" fill="#f0f0f0" text-anchor="start" stroke="#f0f0f0" stroke-width="0.12">film_actor</text>
<text x="254.60" y="261.32" font-size="7.8" fill="#f0f0f0" text-anchor="start" stroke="#f0f0f0" stroke-width="0.12">film_category</text>
<text x="254.60" y="271.90" font-size="7.8" fill="#f0f0f0" text-anchor="start" stroke="#f0f0f0" stroke-width="0.12">film_text</text>
<text x="254.60" y="282.48" font-size="7.8" fill="#f0f0f0" text-anchor="start" stroke="#f0f0f0" stroke-width="0.12">inventory</text>
<text x="263.40" y="293.06" font-size="7.8" fill="#f0f0f0" text-anchor="start" stroke="#f0f0f0" stroke-width="0.12">inventory_id</text>
<text x="263.40" y="303.64" font-size="7.8" fill="#f0f0f0" text-anchor="start" stroke="#f0f0f0" stroke-width="0.12">film_id</text>
<text x="263.40" y="314.22" font-size="7.8" fill="#f0f0f0" text-anchor="start" stroke="#f0f0f0" stroke-width="0.12">store_id</text>
<text x="263.40" y="324.80" font-size="7.8" fill="#f0f0f0" text-anchor="start" stroke="#f0f0f0" stroke-width="0.12">last_update</text>
<text x="254.60" y="335.38" font-size="7.8" fill="#f0f0f0" text-anchor="start" stroke="#f0f0f0" stroke-width="0.12">language</text>
<text x="254.60" y="345.96" font-size="7.8" fill="#f0f0f0" text-anchor="start" stroke="#f0f0f0" stroke-width="0.12">payment</text>
<text x="254.60" y="356.54" font-size="7.8" fill="#f0f0f0" text-anchor="start" stroke="#f0f0f0" stroke-width="0.12">rental</text>
<text x="254.60" y="367.12" font-size="7.8" fill="#f0f0f0" text-anchor="start" stroke="#f0f0f0" stroke-width="0.12">staff</text>
<text x="254.60" y="377.70" font-size="7.8" fill="#f0f0f0" text-anchor="start" stroke="#f0f0f0" stroke-width="0.12">store</text>
<text x="245.80" y="388.28" font-size="7.8" fill="#f0f0f0" text-anchor="start" stroke="#f0f0f0" stroke-width="0.12">Views</text>
<text x="237.00" y="398.86" font-size="7.8" fill="#f0f0f0" text-anchor="start" stroke="#f0f0f0" stroke-width="0.12">test</text>
<text x="439.5" y="93.3" font-size="6.75" fill="#2a2a2a" text-anchor="middle" >Untitled 1.sql</text>
<text x="636" y="93.3" font-size="6.75" fill="#2a2a2a" text-anchor="middle" >actor</text>
<text x="344" y="109" font-size="6.3" fill="#7a7a7a" text-anchor="start" font-weight="bold" letter-spacing="0.15">COLUMNS</text>
<text x="341.8" y="121" font-size="7" fill="#262626" text-anchor="start" textLength="22.73" lengthAdjust="spacingAndGlyphs" >Primary</text>
<text x="371.5" y="121" font-size="7" fill="#262626" text-anchor="start" textLength="44.39" lengthAdjust="spacingAndGlyphs" >Auto increment</text>
<text x="420" y="121" font-size="7" fill="#262626" text-anchor="start" textLength="14.31" lengthAdjust="spacingAndGlyphs" >Field</text>
<text x="515" y="121" font-size="7" fill="#262626" text-anchor="start" textLength="14.31" lengthAdjust="spacingAndGlyphs" >Type</text>
<text x="571.5" y="121" font-size="7" fill="#262626" text-anchor="start" textLength="12.84" lengthAdjust="spacingAndGlyphs" >Size</text>
<text x="608.8" y="121" font-size="7" fill="#262626" text-anchor="start" textLength="23.85" lengthAdjust="spacingAndGlyphs" >Nullable</text>
<text x="646" y="121" font-size="7" fill="#262626" text-anchor="start" textLength="20.91" lengthAdjust="spacingAndGlyphs" >Default</text>
<text x="420" y="131.5" font-size="8" fill="#151515" text-anchor="start" textLength="27.04" lengthAdjust="spacingAndGlyphs" stroke="#151515" stroke-width="0.15">actor_id</text>
<text x="515.5" y="131.5" font-size="8" fill="#151515" text-anchor="start" textLength="33.99" lengthAdjust="spacingAndGlyphs" stroke="#151515" stroke-width="0.15">SMALLINT</text>
<text x="571.5" y="131.5" font-size="8.5" fill="#151515" text-anchor="start" textLength="3.95" lengthAdjust="spacingAndGlyphs" stroke="#151515" stroke-width="0.15">5</text>
<text x="646" y="131.5" font-size="8" fill="#a0a0a0" text-anchor="start" >&lt;auto&gt;</text>
<text x="420" y="142.1" font-size="8" fill="#151515" text-anchor="start" textLength="35.48" lengthAdjust="spacingAndGlyphs" stroke="#151515" stroke-width="0.15">first_name</text>
<text x="515.5" y="142.1" font-size="8" fill="#151515" text-anchor="start" textLength="33.47" lengthAdjust="spacingAndGlyphs" stroke="#151515" stroke-width="0.15">VARCHAR</text>
<text x="571.5" y="142.1" font-size="8.5" fill="#151515" text-anchor="start" textLength="7.90" lengthAdjust="spacingAndGlyphs" stroke="#151515" stroke-width="0.15">45</text>
<text x="420" y="152.7" font-size="8" fill="#151515" text-anchor="start" textLength="35.06" lengthAdjust="spacingAndGlyphs" stroke="#151515" stroke-width="0.15">last_name</text>
<text x="515.5" y="152.7" font-size="8" fill="#151515" text-anchor="start" textLength="33.47" lengthAdjust="spacingAndGlyphs" stroke="#151515" stroke-width="0.15">VARCHAR</text>
<text x="571.5" y="152.7" font-size="8.5" fill="#151515" text-anchor="start" textLength="7.90" lengthAdjust="spacingAndGlyphs" stroke="#151515" stroke-width="0.15">45</text>
<text x="420" y="163.3" font-size="8" fill="#151515" text-anchor="start" textLength="39.30" lengthAdjust="spacingAndGlyphs" stroke="#151515" stroke-width="0.15">last_update</text>
<text x="515.5" y="163.3" font-size="8" fill="#151515" text-anchor="start" textLength="40.03" lengthAdjust="spacingAndGlyphs" stroke="#151515" stroke-width="0.15">TIMESTAMP</text>
<text x="645.8" y="163.3" font-size="8" fill="#151515" text-anchor="start" textLength="75.63" lengthAdjust="spacingAndGlyphs" stroke="#151515" stroke-width="0.15">CURRENT_TIMESTAMP</text>
<text x="344" y="257" font-size="6.3" fill="#a2a2a2" text-anchor="start" font-weight="bold" letter-spacing="0.15">INDEXES</text>
<text x="341.8" y="269.4" font-size="7" fill="#262626" text-anchor="start" textLength="17.61" lengthAdjust="spacingAndGlyphs" >Name</text>
<text x="420" y="269.4" font-size="7" fill="#262626" text-anchor="start" textLength="14.31" lengthAdjust="spacingAndGlyphs" >Type</text>
<text x="465.8" y="269.4" font-size="7" fill="#262626" text-anchor="start" textLength="17.61" lengthAdjust="spacingAndGlyphs" >Fields</text>
<text x="571" y="269.4" font-size="7" fill="#262626" text-anchor="start" textLength="20.90" lengthAdjust="spacingAndGlyphs" >Format</text>
<text x="611.5" y="269.4" font-size="7" fill="#262626" text-anchor="start" textLength="28.61" lengthAdjust="spacingAndGlyphs" >Comment</text>
<text x="341.8" y="280.6" font-size="8" fill="#151515" text-anchor="start" textLength="31.54" lengthAdjust="spacingAndGlyphs" stroke="#151515" stroke-width="0.15">PRIMARY</text>
<text x="420" y="280.6" font-size="8" fill="#151515" text-anchor="start" textLength="27.03" lengthAdjust="spacingAndGlyphs" stroke="#151515" stroke-width="0.15">UNIQUE</text>
<text x="466" y="280.6" font-size="8" fill="#151515" text-anchor="start" textLength="27.04" lengthAdjust="spacingAndGlyphs" stroke="#151515" stroke-width="0.15">actor_id</text>
<text x="571" y="280.6" font-size="8" fill="#151515" text-anchor="start" textLength="23.17" lengthAdjust="spacingAndGlyphs" stroke="#151515" stroke-width="0.15">BTREE</text>
<text x="341.8" y="291.0" font-size="8" fill="#151515" text-anchor="start" textLength="69.67" lengthAdjust="spacingAndGlyphs" stroke="#151515" stroke-width="0.15">idx_actor_last_name</text>
<text x="420" y="291.0" font-size="8" fill="#151515" text-anchor="start" textLength="21.24" lengthAdjust="spacingAndGlyphs" stroke="#151515" stroke-width="0.15">INDEX</text>
<text x="466" y="291.0" font-size="8" fill="#151515" text-anchor="start" textLength="35.06" lengthAdjust="spacingAndGlyphs" stroke="#151515" stroke-width="0.15">last_name</text>
<text x="571" y="291.0" font-size="8" fill="#151515" text-anchor="start" textLength="23.17" lengthAdjust="spacingAndGlyphs" stroke="#151515" stroke-width="0.15">BTREE</text></svg>
</body></html>
